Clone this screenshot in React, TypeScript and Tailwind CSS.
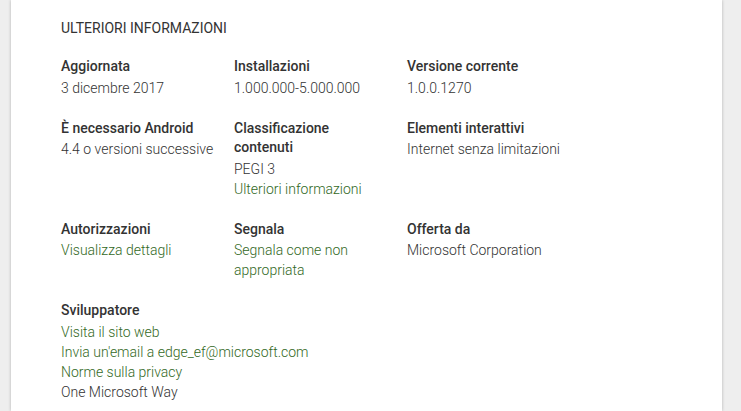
const font = { fontFamily: "Roboto, 'Noto Sans', Arial, sans-serif" };

type Item = { label: string; values: { text: string; link?: boolean }[] };

const ROWS: Item[][] = [
  [
    { label: "Aggiornata", values: [{ text: "3 dicembre 2017" }] },
    { label: "Installazioni", values: [{ text: "1.000.000-5.000.000" }] },
    { label: "Versione corrente", values: [{ text: "1.0.0.1270" }] },
  ],
  [
    { label: "È necessario Android", values: [{ text: "4.4 o versioni successive" }] },
    {
      label: "Classificazione contenuti",
      values: [{ text: "PEGI 3" }, { text: "Ulteriori informazioni", link: true }],
    },
    { label: "Elementi interattivi", values: [{ text: "Internet senza limitazioni" }] },
  ],
  [
    { label: "Autorizzazioni", values: [{ text: "Visualizza dettagli", link: true }] },
    { label: "Segnala", values: [{ text: "Segnala come non appropriata", link: true }] },
    { label: "Offerta da", values: [{ text: "Microsoft Corporation" }] },
  ],
  [
    {
      label: "Sviluppatore",
      values: [
        { text: "Visita il sito web", link: true },
        { text: "Invia un'email a edge_ef@microsoft.com", link: true },
        { text: "Norme sulla privacy", link: true },
        { text: "One Microsoft Way" },
      ],
    },
  ],
];

function Info({ item, wide }: { item: Item; wide?: boolean }) {
  return (
    <div className={wide ? "col-span-3" : "pr-5"}>
      <div className="text-[14px] leading-[19.5px] font-medium text-[#333333]">{item.label}</div>
      <div className="mt-px">
        {item.values.map((v) => (
          <div
            key={v.text}
            className={`text-[14px] leading-[20px] font-light ${v.link ? "text-[#33691e]" : "text-[#333333]"}`}
          >
            {v.text}
          </div>
        ))}
      </div>
    </div>
  );
}

export default function App() {
  return (
    <div className="w-[741px] h-[411px] overflow-hidden bg-[#eeeeee]" style={font}>
      <div className="ml-[11px] w-[711px] h-full bg-white shadow-[0_0_3px_rgba(0,0,0,0.25)] pl-[50px] pt-[18px]">
        <h2 className="text-[14px] leading-[20px] text-[#333333] uppercase">Ulteriori informazioni</h2>
        <div className="mt-[19px] grid grid-cols-[173px_173px_173px] gap-y-[21px]">
          {ROWS.map((row) =>
            row.map((item) => <Info key={item.label} item={item} wide={row.length === 1} />)
          )}
        </div>
      </div>
    </div>
  );
}
